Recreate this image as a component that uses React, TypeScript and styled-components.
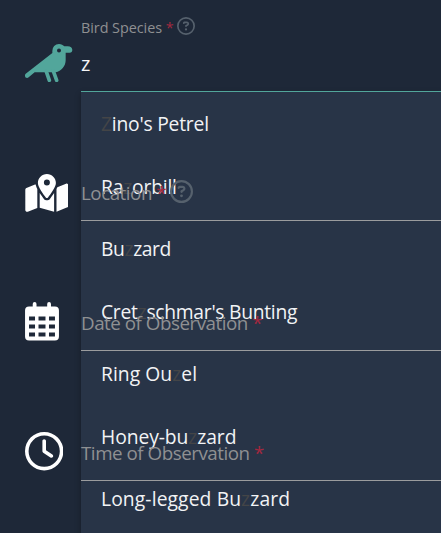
import React from 'react';
import styled, { createGlobalStyle } from 'styled-components';
import { FaMapLocationDot, FaRegClock, FaRegCircleQuestion } from 'react-icons/fa6';

const GlobalStyle = createGlobalStyle`
  * { box-sizing: border-box; }
  body { margin: 0; overflow: hidden; background: #1e2838; font-family: "Open Sans", "Noto Sans", sans-serif; }
`;

const Form = styled.form`
  position: relative;
  display: grid;
  grid-template-rows: 92px 129px 130px 130px 52px;
  height: 533px;
  overflow: hidden;
  background: #1e2838;
`;

const Field = styled.div`
  display: grid;
  grid-template-columns: 81px 1fr;
`;

const IconCell = styled.div<{ $active?: boolean; $w: number; $bottom?: number }>`
  display: flex;
  align-items: flex-end;
  padding: 0 0 ${p => p.$bottom ?? 10.2}px 24.6px;
  color: ${p => (p.$active ? '#52a69b' : '#fff')};
  svg { display: block; flex: none; width: ${p => p.$w}px; height: 38.4px; }
`;

const Control = styled.div<{ $active?: boolean }>`
  display: flex;
  flex-direction: column;
  justify-content: flex-end;
  border-bottom: 1px solid ${p => (p.$active ? '#52a69b' : '#9b9c9e')};
  position: relative;
  z-index: 2;
`;

const Label = styled.label<{ $small?: boolean }>`
  display: flex;
  align-items: center;
  height: ${p => (p.$small ? 20 : 28)}px;
  margin-bottom: ${p => (p.$small ? 7 : 13)}px;
  font-size: ${p => (p.$small ? 14.4 : 18.8)}px;
  letter-spacing: ${p => (p.$small ? -0.05 : -0.48)}px;
  color: #8f9092;
  white-space: pre;
`;

const Star = styled.span`
  color: #a3283f;
  letter-spacing: 0;
`;

const Help = styled(FaRegCircleQuestion)<{ $gap: number; $lift: number }>`
  flex: none;
  margin: 0 0 ${p => p.$lift * 2}px ${p => p.$gap}px;
  color: #56616d;
`;

const Input = styled.input`
  height: 40px;
  margin-bottom: 7px;
  padding: 0 0 1px;
  border: 0;
  outline: 0;
  background: none;
  color: #f5f6f7;
  font: 20px "Open Sans", sans-serif;
`;

const Menu = styled.ul`
  position: absolute;
  z-index: 1;
  left: 81px;
  right: 0;
  top: 92px;
  height: 460px;
  margin: 0;
  padding: 0.5px 0 0;
  list-style: none;
  background: #283447;
  box-shadow: 0 2px 6px rgba(0, 0, 0, 0.3);
`;

const Option = styled.li<{ $ls: number }>`
  display: flex;
  align-items: center;
  height: 62.5px;
  padding-left: 20px;
  color: #f2f3f5;
  font-size: 19.3px;
  letter-spacing: ${p => p.$ls}px;
  white-space: pre;
`;

const Match = styled.span`
  color: #444547;
`;

const BirdIcon = () => (
  <svg viewBox="0 0 144 115" fill="currentColor">
    <path fillRule="evenodd" d="M82 27V21A20 20 0 0 1 102 0C109 0 114 3 118 7H128C137 7 142 12 142 18C142 23 139 26 134 26H122V49C122 66 109 82 92 85H29L11 100C6 104 0 101 0 95C0 92 1 90 4 88ZM102 13.500a6 6 0 1 0 0 12a6 6 0 0 0 0-12Z" />
    <path d="M64 83L73 109M85 81L95 109" fill="none" stroke="currentColor" strokeWidth="11" strokeLinecap="round" />
  </svg>
);

const CalendarIcon = () => (
  <svg viewBox="0 0 34 38.5" fill="currentColor">
    <path fillRule="evenodd" d="M4 4.500H7.700V2a1.900 1.900 0 0 1 3.800 0v2.500h10.700V2a1.900 1.900 0 0 1 3.800 0v2.500H30a4 4 0 0 1 4 4V34.500a4 4 0 0 1-4 4H4a4 4 0 0 1-4-4V8.500a4 4 0 0 1 4-4ZM4 14.500v4h6v-4ZM13.500 14.500v4h7v-4ZM24 14.500v4h6v-4ZM4 22.500v4h6v-4ZM13.500 22.500v4h7v-4ZM24 22.500v4h6v-4ZM4 30.500v4h6v-4ZM13.500 30.500v4h7v-4ZM24 30.500v4h6v-4Z" />
  </svg>
);

const options: [string, string, string, number][] = [
  ['', 'Z', "ino's Petrel", -0.22],
  ['Ra', 'z', 'orbill', -0.2],
  ['Bu', 'z', 'zard', -0.4],
  ['Cret', 'z', "schmar's Bunting", -0.28],
  ['Ring Ou', 'z', 'el', 0.05],
  ['Honey-bu', 'z', 'zard', -0.08],
  ['Long-legged Bu', 'z', 'zard', 0.1],
];

export default function App() {
  return (
    <>
      <GlobalStyle />
      <Form>
        <Field>
          <IconCell $active $w={48} $bottom={9.8}><BirdIcon /></IconCell>
          <Control $active>
            <Label $small>Bird Species <Star>*</Star><Help size={18} $gap={3} $lift={1} /></Label>
            <Input defaultValue="z" />
          </Control>
        </Field>
        <Field>
          <IconCell $w={43.8} $bottom={9}><FaMapLocationDot /></IconCell>
          <Control><Label>Location <Star>*</Star><Help size={23} $gap={3.5} $lift={2} /></Label></Control>
        </Field>
        <Field>
          <IconCell $w={34}><CalendarIcon /></IconCell>
          <Control><Label>Date of Observation <Star>*</Star></Label></Control>
        </Field>
        <Field>
          <IconCell $w={38.4}><FaRegClock /></IconCell>
          <Control><Label>Time of Observation <Star>*</Star></Label></Control>
        </Field>
        <Menu>
          {options.map(([before, match, after, ls]) => (
            <Option key={before + after} $ls={ls}>{before}<Match>{match}</Match>{after}</Option>
          ))}
        </Menu>
      </Form>
    </>
  );
}
